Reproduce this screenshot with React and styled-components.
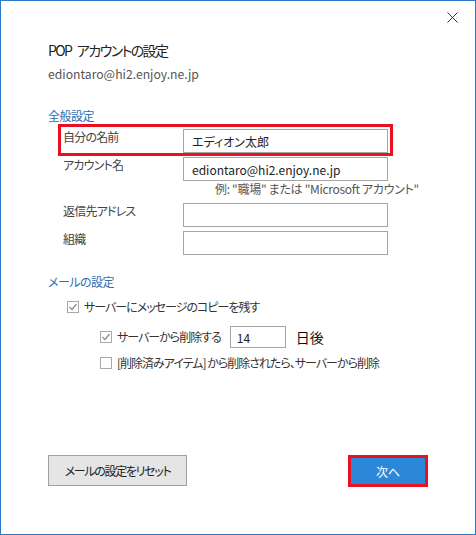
import React from "react";
import styled, { createGlobalStyle } from "styled-components";

const GlobalStyle = createGlobalStyle`
  html, body {
    margin: 0;
    padding: 0;
    background: #fff;
  }
  body {
    font-family: "Noto Sans CJK JP", "Noto Sans", sans-serif;
    font-feature-settings: "palt" 1;
  }
  button, input {
    font-feature-settings: "palt" 1;
  }
`;

const Window = styled.div`
  width: 476px;
  height: 535px;
  box-sizing: border-box;
  border: 1px solid #2b79c9;
  background: #fff;
  display: flex;
  flex-direction: column;
`;

const TopBar = styled.div`
  height: 32px;
  display: flex;
  justify-content: flex-end;
  align-items: flex-start;
  padding: 10px 17px 0 0;
  box-sizing: border-box;
`;

const CloseButton = styled.button`
  width: 12px;
  height: 12px;
  padding: 0;
  border: none;
  background: transparent;
  display: flex;
  align-items: center;
  justify-content: center;
`;

const Content = styled.div`
  padding: 0 47px;
  display: flex;
  flex-direction: column;
  flex: 1;
`;

const Title = styled.h1`
  margin: 7px 0 0;
  font-size: 14px;
  line-height: 20px;
  font-weight: 400;
  color: #222;
  letter-spacing: -1.6px;
  word-spacing: 4px;
`;

const Subtitle = styled.div`
  margin-top: 6px;
  font-size: 12.2px;
  line-height: 16px;
  color: #555;
`;

const SectionHeading = styled.div`
  margin-top: ${(p) => p.$top}px;
  font-size: 12px;
  line-height: 16px;
  color: #2f6cb0;
  letter-spacing: -0.5px;
`;

const Row = styled.div`
  margin: ${(p) => p.$top || 0}px 0 0 10px;
  width: 335px;
  box-sizing: border-box;
  display: flex;
  align-items: flex-start;
  border: ${(p) => (p.$highlight ? "3px solid #e81123" : "none")};
  padding: ${(p) => (p.$highlight ? "2px 2px 0 2px" : "0 5px")};
`;

const Label = styled.label`
  width: 120px;
  flex: none;
  font-size: 12px;
  line-height: 16px;
  color: #444;
  letter-spacing: -0.8px;
`;

const TextInput = styled.input`
  width: ${(p) => p.$width || 205}px;
  height: ${(p) => p.$height || 24}px;
  box-sizing: border-box;
  border: 1px solid #a5a5a5;
  padding: 0 8px;
  font-family: inherit;
  font-size: 12px;
  color: #222;
  background: #fff;
  outline: none;
`;

const Hint = styled.div`
  margin-left: 167px;
  font-size: 12px;
  line-height: 16px;
  color: #555;
  white-space: nowrap;
  letter-spacing: -0.3px;
`;

const CheckRow = styled.div`
  margin: ${(p) => p.$top}px 0 0 ${(p) => p.$indent}px;
  display: flex;
  align-items: center;
  min-height: 16px;
`;

const Box = styled.span`
  width: 12px;
  height: 12px;
  box-sizing: border-box;
  border: 1px solid #a8a8a8;
  background: #fff;
  display: flex;
  align-items: center;
  justify-content: center;
  flex: none;
  margin-right: 5px;
`;

const CheckText = styled.span`
  font-size: 12px;
  line-height: 16px;
  color: #333;
  white-space: nowrap;
  letter-spacing: -1px;
`;

const DaysInput = styled(TextInput)`
  margin-left: 9px;
  padding: 0 6px;
`;

const Unit = styled.span`
  margin-left: 10px;
  font-size: 14px;
  line-height: 16px;
  color: #111;
`;

const ButtonBar = styled.div`
  margin-top: auto;
  padding-bottom: 47px;
  display: flex;
  justify-content: space-between;
  align-items: flex-start;
`;

const ResetButton = styled.button`
  width: 139px;
  height: 31px;
  box-sizing: border-box;
  border: 1px solid #a0a0a0;
  background: #e5e5e5;
  font-family: inherit;
  font-size: 12px;
  color: #222;
  padding: 0;
  letter-spacing: -1.3px;
`;

const NextButton = styled.button`
  width: 80px;
  height: 32px;
  box-sizing: border-box;
  border: 3px solid #e81123;
  background: #2b88d8;
  font-family: inherit;
  font-size: 12px;
  color: #fff;
  padding: 0;
`;

function CheckBox({ checked }) {
  return (
    <Box>
      {checked && (
        <svg width="10" height="10" viewBox="0 0 10 10">
          <path d="M1.5 5 L4 7.5 L8.5 2" fill="none" stroke="#8c8c8c" strokeWidth="1.2" />
        </svg>
      )}
    </Box>
  );
}

export default function App() {
  return (
    <>
      <GlobalStyle />
      <Window>
        <TopBar>
          <CloseButton aria-label="閉じる">
            <svg width="11" height="11" viewBox="0 0 11 11">
              <path d="M0.5 0.5 L10.5 10.5 M10.5 0.5 L0.5 10.5" stroke="#333" strokeWidth="1" />
            </svg>
          </CloseButton>
        </TopBar>
        <Content>
          <Title>POP アカウントの設定</Title>
          <Subtitle>ediontaro@hi2.enjoy.ne.jp</Subtitle>

          <SectionHeading $top={26}>全般設定</SectionHeading>
          <Row $highlight>
            <Label>自分の名前</Label>
            <TextInput defaultValue="エディオン太郎" />
          </Row>
          <Row $top={1}>
            <Label>アカウント名</Label>
            <TextInput defaultValue="ediontaro@hi2.enjoy.ne.jp" />
          </Row>
          <Hint>例: "職場" または "Microsoft アカウント"</Hint>
          <Row $top={6}>
            <Label>返信先アドレス</Label>
            <TextInput />
          </Row>
          <Row $top={4}>
            <Label>組織</Label>
            <TextInput />
          </Row>

          <SectionHeading $top={19}>メールの設定</SectionHeading>
          <CheckRow $top={9} $indent={19}>
            <CheckBox checked />
            <CheckText>サーバーにメッセージのコピーを残す</CheckText>
          </CheckRow>
          <CheckRow $top={11} $indent={52}>
            <CheckBox checked />
            <CheckText>サーバーから削除する</CheckText>
            <DaysInput $width={56} $height={22} defaultValue="14" />
            <Unit>日後</Unit>
          </CheckRow>
          <CheckRow $top={7} $indent={52}>
            <CheckBox />
            <CheckText>[削除済みアイテム] から削除されたら、サーバーから削除</CheckText>
          </CheckRow>

          <ButtonBar>
            <ResetButton>メールの設定をリセット</ResetButton>
            <NextButton>次へ</NextButton>
          </ButtonBar>
        </Content>
      </Window>
    </>
  );
}
